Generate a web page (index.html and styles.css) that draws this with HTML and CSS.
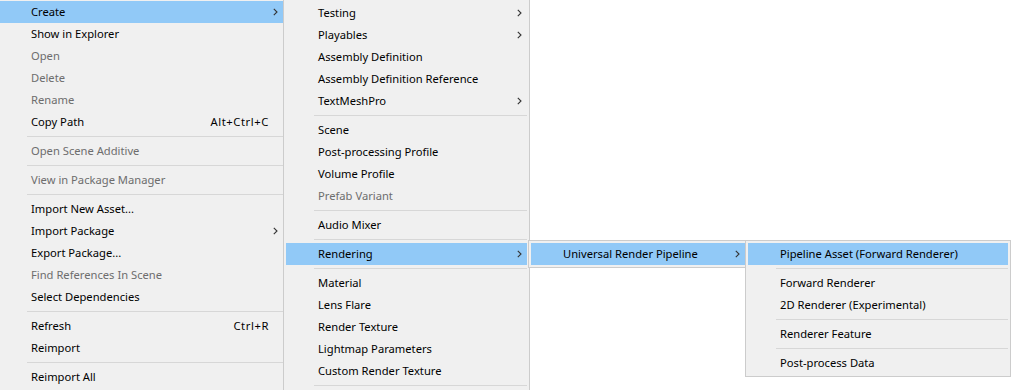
FILE: index.html
```html
<!DOCTYPE html>
<html lang="en">
<head>
  <meta charset="UTF-8" />
  <title>Assets context menu</title>
  <link rel="stylesheet" href="styles.css">
</head>
<body>
  <div class="desk">

    <!-- main context menu -->
    <div class="menu menu-main">
      <div class="item active"><span class="label">Create</span><svg class="arrow" viewBox="0 0 5 8"><polyline points="0.8,0.8 4,4 0.8,7.2"/></svg></div>
      <div class="item"><span class="label">Show in Explorer</span></div>
      <div class="item off"><span class="label">Open</span></div>
      <div class="item off"><span class="label">Delete</span></div>
      <div class="item off"><span class="label">Rename</span></div>
      <div class="item"><span class="label">Copy Path</span><span class="keys">Alt+Ctrl+C</span></div>
      <div class="sep"></div>
      <div class="item off"><span class="label">Open Scene Additive</span></div>
      <div class="sep"></div>
      <div class="item off"><span class="label">View in Package Manager</span></div>
      <div class="sep"></div>
      <div class="item"><span class="label">Import New Asset...</span></div>
      <div class="item"><span class="label">Import Package</span><svg class="arrow" viewBox="0 0 5 8"><polyline points="0.8,0.8 4,4 0.8,7.2"/></svg></div>
      <div class="item"><span class="label">Export Package...</span></div>
      <div class="item off"><span class="label">Find References In Scene</span></div>
      <div class="item"><span class="label">Select Dependencies</span></div>
      <div class="sep"></div>
      <div class="item"><span class="label">Refresh</span><span class="keys">Ctrl+R</span></div>
      <div class="item"><span class="label">Reimport</span></div>
      <div class="sep"></div>
      <div class="item"><span class="label">Reimport All</span></div>
    </div>

    <!-- Create submenu -->
    <div class="menu menu-create">
      <div class="item"><span class="label">Testing</span><svg class="arrow" viewBox="0 0 5 8"><polyline points="0.8,0.8 4,4 0.8,7.2"/></svg></div>
      <div class="item"><span class="label">Playables</span><svg class="arrow" viewBox="0 0 5 8"><polyline points="0.8,0.8 4,4 0.8,7.2"/></svg></div>
      <div class="item"><span class="label">Assembly Definition</span></div>
      <div class="item"><span class="label">Assembly Definition Reference</span></div>
      <div class="item"><span class="label">TextMeshPro</span><svg class="arrow" viewBox="0 0 5 8"><polyline points="0.8,0.8 4,4 0.8,7.2"/></svg></div>
      <div class="sep"></div>
      <div class="item"><span class="label">Scene</span></div>
      <div class="item"><span class="label">Post-processing Profile</span></div>
      <div class="item"><span class="label">Volume Profile</span></div>
      <div class="item off"><span class="label">Prefab Variant</span></div>
      <div class="sep"></div>
      <div class="item"><span class="label">Audio Mixer</span></div>
      <div class="sep"></div>
      <div class="item active"><span class="label">Rendering</span><svg class="arrow" viewBox="0 0 5 8"><polyline points="0.8,0.8 4,4 0.8,7.2"/></svg></div>
      <div class="sep"></div>
      <div class="item"><span class="label">Material</span></div>
      <div class="item"><span class="label">Lens Flare</span></div>
      <div class="item"><span class="label">Render Texture</span></div>
      <div class="item"><span class="label">Lightmap Parameters</span></div>
      <div class="item"><span class="label">Custom Render Texture</span></div>
      <div class="sep"></div>
    </div>

    <!-- Rendering submenu -->
    <div class="menu menu-render">
      <div class="item active"><span class="label">Universal Render Pipeline</span><svg class="arrow" viewBox="0 0 5 8"><polyline points="0.8,0.8 4,4 0.8,7.2"/></svg></div>
    </div>

    <!-- URP submenu -->
    <div class="menu menu-urp">
      <div class="item active"><span class="label">Pipeline Asset (Forward Renderer)</span></div>
      <div class="sep"></div>
      <div class="item"><span class="label">Forward Renderer</span></div>
      <div class="item"><span class="label">2D Renderer (Experimental)</span></div>
      <div class="sep"></div>
      <div class="item"><span class="label">Renderer Feature</span></div>
      <div class="sep"></div>
      <div class="item"><span class="label">Post-process Data</span></div>
    </div>

  </div>
</body>
</html>
```

FILE: styles.css
```css
body {
  margin: 0;
  background: #fff;
  font-family: "Noto Sans", "Open Sans", sans-serif;
  font-size: 11.2px;
  color: #000;
}
.desk {
  position: relative;
  width: 1011px;
  height: 390px;
  overflow: hidden;
}
.menu {
  position: absolute;
  background: #f0f0f0;
  border: 1px solid #cccccc;
  padding: 2px;
}
.menu-main {
  left: -4px;
  top: -2px;
  width: 284px;
  height: 400px;
}
.menu-create {
  left: 283px;
  top: -1px;
  width: 241px;
  height: 400px;
}
.menu-render {
  left: 528px;
  top: 240px;
  width: 214px;
}
.menu-urp {
  left: 745px;
  top: 240px;
  width: 260px;
}
.item {
  box-sizing: border-box;
  display: flex;
  align-items: center;
  height: 22px;
  padding-left: 32px;
  padding-bottom: 1px;
  white-space: nowrap;
}
.item .label {
  flex: 1;
}
.item.active {
  background: #91c9f7;
}
.item.off {
  color: #6d6d6d;
}
.keys {
  margin-right: 14px;
  letter-spacing: 0.6px;
}
.arrow {
  width: 5px;
  height: 8px;
  margin-right: 5px;
  fill: none;
  stroke: #333;
  stroke-width: 1.1;
}
.sep {
  height: 4px;
  padding-top: 3px;
  margin-left: 28px;
}
.sep::after {
  content: "";
  display: block;
  height: 1px;
  background: #d7d7d7;
}
```
